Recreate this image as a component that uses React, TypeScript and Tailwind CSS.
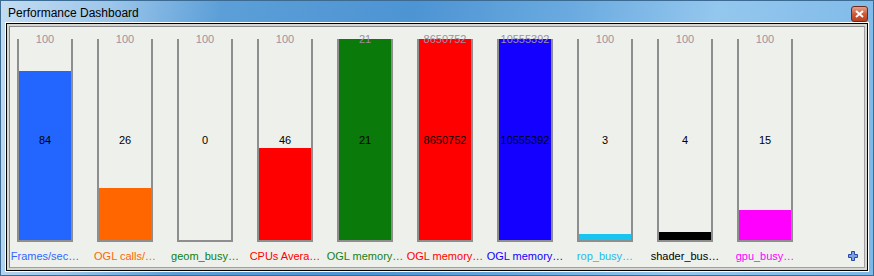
import React from "react";

const gauges = [
	{ label: "Frames/sec…", value: "84", pct: 84, color: "#2266ff", text: "#3366ff" },
	{ label: "OGL calls/…", value: "26", pct: 26, color: "#ff6600", text: "#ff6600" },
	{ label: "geom_busy…", value: "0", pct: 0, color: "#008000", text: "#108010" },
	{ label: "CPUs Avera…", value: "46", pct: 46, color: "#ff0000", text: "#ff0000" },
	{ label: "OGL memory…", value: "21", pct: 100, color: "#0a7b0a", text: "#1a801a", max: "21" },
	{ label: "OGL memory…", value: "8650752", pct: 100, color: "#ff0000", text: "#ff0000", max: "8650752" },
	{ label: "OGL memory…", value: "10555392", pct: 100, color: "#1400ff", text: "#1400ff", max: "10555392" },
	{ label: "rop_busy…", value: "3", pct: 3, color: "#18c4f0", text: "#22bbee" },
	{ label: "shader_bus…", value: "4", pct: 4, color: "#000000", text: "#000000" },
	{ label: "gpu_busy…", value: "15", pct: 15, color: "#ff00ff", text: "#ff00ff" },
];

const Gauge = ({ g }: { g: (typeof gauges)[number] }) => {
	return (
		<div className="flex flex-col w-[56px]">
			<div className="relative h-[203px] border-x-2 border-b-2 border-[#8e8e8e] flex flex-col justify-end">
				<div style={{ height: `${g.pct}%`, background: g.color }} />
				<div className="absolute inset-0 flex items-center justify-center pt-[2px] text-black">
					{g.value}
				</div>
				<div className="absolute -top-[6px] -left-[14px] -right-[14px] h-[13px] leading-[13px] text-center text-[#9a90a2]">
					{g.max ?? "100"}
				</div>
			</div>
			<div
				className="-mx-[12px] mt-[7px] h-[14px] leading-[14px] text-center whitespace-nowrap"
				style={{ color: g.text }}
			>
				{g.label}
			</div>
		</div>
	);
};

const App = () => {
	return (
		<div
			className="w-[874px] h-[276px] flex flex-col border border-[#3b6a93] text-[11px]"
			style={{
				fontFamily: '"Liberation Sans", Arial, sans-serif',
				background:
					"linear-gradient(100deg, #c3dcf1 0%, #9cc6ea 12%, #5c9fd8 24%, #4d94d3 45%, #6aaae0 62%, #94c7ee 78%, #7bb8e8 100%)",
			}}
		>
			<div className="h-[21px] flex items-center justify-between pl-[7px] pr-[5px]">
				<div className="text-[12px] text-black pt-[2px]">Performance Dashboard</div>
				<div className="w-[17px] h-[16px] mt-[4px] rounded-[3px] border border-[#6b2a1b] flex items-center justify-center bg-gradient-to-b from-[#e4a08a] via-[#cc5a3a] to-[#b8401f]">
					<svg width="9" height="8" viewBox="0 0 9 8">
						<path d="M1 1 L8 7 M8 1 L1 7" stroke="#fff" strokeWidth="2" />
					</svg>
				</div>
			</div>
			<div className="ml-[4px] mr-[4px] mb-[3px] flex-1 border border-white">
				<div className="h-full border border-black">
					<div className="h-full border-2 border-[#d6d6d2]">
						<div className="h-full border border-t-[#8c8c8c] border-l-[#8c8c8c] border-r-[#a0a0a0] border-b-[#a0a0a0] bg-[#eef0eb] flex items-start pl-[7px] pt-[12px] gap-[24px] relative">
							{gauges.map((g, i) => (
								<Gauge key={i} g={g} />
							))}
							<svg
								className="absolute right-[6px] bottom-[6px]"
								width="10"
								height="10"
								viewBox="0 0 10 10"
							>
								<path
									d="M3.5 0.5 H6.5 V3.5 H9.5 V6.5 H6.5 V9.5 H3.5 V6.5 H0.5 V3.5 H3.5 Z"
									fill="#7fa0e0"
									stroke="#2848a8"
									strokeWidth="1"
								/>
							</svg>
						</div>
					</div>
				</div>
			</div>
		</div>
	);
};

export default App;
